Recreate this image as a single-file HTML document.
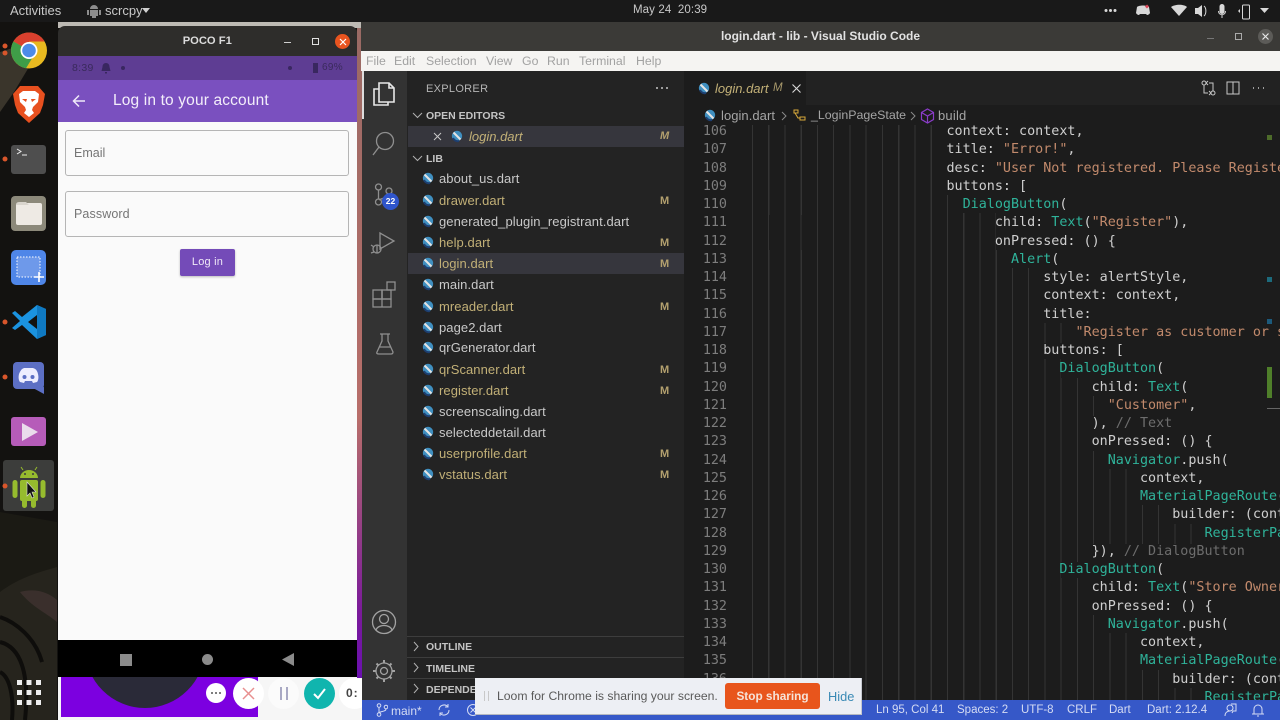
<!DOCTYPE html>
<html><head><meta charset="utf-8"><style>
*{box-sizing:border-box}
html,body{margin:0;padding:0;width:1280px;height:720px;overflow:hidden;background:#141311;font-family:"Liberation Sans",sans-serif}
.a{position:absolute;white-space:nowrap}
.f{position:absolute;left:439px;font-size:13px;letter-spacing:.07px;color:#c9c9c9;line-height:18px;white-space:nowrap}
.y{color:#c2b077}
.m{position:absolute;left:660px;font-size:11px;font-weight:bold;color:#b3a06e;line-height:14px}
.h{position:absolute;font-size:10.500px;font-weight:bold;color:#c4c4c4;white-space:nowrap}
.mn{position:absolute;top:54px;font-size:12.300px;color:#a2a2a2;white-space:nowrap}
#code{position:absolute;left:684px;top:125px;width:596px;height:575px;overflow:hidden;background:#1c1c1c}
#wrap{position:absolute;left:0;top:2px;width:596px;height:580px}
.l{position:absolute;left:0;height:18.250px;width:596px;font:13.400px/18.250px "DejaVu Sans Mono",monospace;color:#cfcfcf;white-space:pre}
.l b{font-weight:normal;position:absolute;left:0;width:43px;text-align:right;color:#7d7d7d}
.l i{font-style:normal;position:absolute;left:67.500px;top:-1px;height:20px;background:repeating-linear-gradient(to right,#343434 0,#343434 1px,transparent 1px,transparent 16.250px)}
.l span{position:absolute;left:69px}
.l u{text-decoration:none}
.t{color:#2fb39a}.s{color:#c28a6c}.c{color:#6d6d6d}
.st{position:absolute;top:704px;font-size:11.500px;color:#d5dcf3;white-space:nowrap}
</style></head><body>

<!-- wallpaper / dock -->
<svg class="a" style="left:0;top:22px" width="60" height="698">
<rect width="60" height="698" fill="#131210"/>
<path d="M0 30 L25 22 L32 40 L14 70 L0 90Z" fill="#3a352b"/>
<path d="M0 490 L57 500 L57 640 L0 640Z" fill="#1b1a14"/>
<path d="M0 570 C20 555 40 550 57 545 L57 698 L0 698Z" fill="#26241d"/>
<path d="M0 595 C15 600 35 615 42 640 M0 620 C20 625 30 650 25 698 M0 650 C10 655 14 675 12 698" stroke="#0e0d0b" stroke-width="4" fill="none"/>
<path d="M20 570 C35 566 48 570 57 578 L57 600 C45 590 32 585 20 570Z" fill="#3a2f2c"/>
</svg>

<!-- top bar -->
<div class="a" style="left:0;top:0;width:1280px;height:22px;background:#191919"></div>
<div class="a" style="left:10px;top:3px;font-size:13px;color:#c8c8c8">Activities</div>
<svg class="a" style="left:87px;top:4px" width="14" height="15"><path d="M3 5a4 4 0 0 1 8 0zM3 6h8v6H9v2H5v-2H3zM0 6h2v5H0zM12 6h2v5h-2z" fill="#8d8d8d"/></svg>
<div class="a" style="left:105px;top:3px;font-size:13px;color:#c8c8c8">scrcpy</div>
<svg class="a" style="left:142px;top:8px" width="9" height="6"><path d="M0 0h8L4 5z" fill="#d0d0d0"/></svg>
<div class="a" style="left:633px;top:4px;font-size:11.500px;letter-spacing:.1px;color:#c8c8c8">May 24&nbsp; 20:39</div>
<svg class="a" style="left:1100px;top:0" width="180" height="22">
<g fill="#d8d8d8"><circle cx="6" cy="10.500" r="1.500"/><circle cx="10.500" cy="10.500" r="1.500"/><circle cx="15" cy="10.500" r="1.500"/>
<path d="M37 7c2-2 10-2 12 0l1 6c-1 2-3 2-3 2l-1-1h-6l-1 1s-2 0-3-2z"/>
<path d="M71 7c4-3 13-3 16 0l-8 9z"/>
<path d="M95 8h3l4-3v12l-4-3h-3z"/><path d="M104 6c2.500 2 2.500 8 0 10" stroke="#d8d8d8" fill="none"/>
<rect x="119.500" y="4" width="5" height="10" rx="2.500"/><path d="M118.500 11c0 5 7 5 7 0M122 15v3" stroke="#d8d8d8" fill="none"/>
<path d="M140 9l-2 2 2 2z"/></g>
<rect x="142.500" y="5" width="7" height="14" rx="1" stroke="#d8d8d8" fill="none"/>
<path d="M46 5.500l2 2" stroke="#d9485a" stroke-width="3"/>
</svg>
<svg class="a" style="left:1260px;top:8px" width="10" height="6"><path d="M0 0h9L4.500 5z" fill="#d8d8d8"/></svg>

<!-- dock icons -->
<svg class="a" style="left:0;top:22px" width="58" height="698">
<circle cx="5" cy="24" r="2.500" fill="#d9562b"/><circle cx="5" cy="31" r="2.500" fill="#d9562b"/>
<g transform="translate(29,28.500)">
<circle r="18" fill="#e8b920"/>
<path d="M0 0 L-15.600 -9 A18 18 0 0 1 15.600 -9 L0 -9Z" fill="#d8402e"/><path d="M-15.600 -9 A18 18 0 0 0 -3 17.700 L6 3Z" fill="#3f9d48"/>
<circle r="8.500" fill="#fff"/><circle r="6.800" fill="#4c8be8"/></g>
<path d="M20 64h18l7 8-2 11-3 8-11 10-11-10-3-8-2-11z" fill="#e8501f"/>
<path d="M19 72l4-3h12l4 3-1 8-5 5-1 3 2 3-5 4-5-4 2-3-1-3-5-5z" fill="#fff"/><path d="M22 77h5l-1 3zM36 77h-5l1 3z" fill="#e8501f"/>
<rect x="11" y="123" width="35" height="29" rx="3" fill="#4e4e4e"/><circle cx="5" cy="137" r="2.500" fill="#d9562b"/>
<path d="M17 127l4 2.500-4 2.500" stroke="#eee" fill="none"/><path d="M22 133h5" stroke="#eee"/>
<rect x="11" y="174" width="35" height="35" rx="4" fill="#8c897a"/><rect x="16" y="181" width="26" height="22" rx="2" fill="#eeeae4"/><path d="M16 183q0-3 3-3h7l3 3z" fill="#d9d5cd"/>
<rect x="11" y="228" width="35" height="35" rx="5" fill="#4f86e8"/><rect x="17" y="235" width="23" height="20" fill="#6e99ea" stroke="#fff" stroke-dasharray="1.500 1.500"/><path d="M39 250v10M34 255h10" stroke="#fff" stroke-width="1.600"/>
<circle cx="5" cy="300" r="2.500" fill="#d9562b"/>
<g transform="translate(0,-11)"><path d="M37 294l9 4v26l-9 4-15-14-7 5-3-2 8-7-8-8 3-2 7 6z" fill="#1b93e0"/><path d="M37 304l-9 7 9 7z" fill="#131210"/><path d="M37 294l9 4v26l-9 4z" fill="#0f79c2"/></g>
<rect x="13" y="340" width="31" height="27" rx="4" fill="#5c6fc4"/><path d="M33 366l11 6v-7z" fill="#5c6fc4"/>
<path d="M19 352c2-5 4-6 6-6h7c2 0 5 1 6 6 1 4 0 7-1 8l-4 1-1-2h-7l-1 2-4-1c-1-1-2-4-1-8z" fill="#eef"/><circle cx="24.500" cy="355" r="2" fill="#5c6fc4"/><circle cx="32.500" cy="355" r="2" fill="#5c6fc4"/>
<circle cx="5" cy="355" r="2.500" fill="#d9562b"/>
<rect x="11" y="395" width="35" height="29" rx="3" fill="#b65cb9"/><path d="M22 401l16 9-16 9z" fill="#eadcec"/>
<rect x="3" y="438" width="51" height="51" rx="3" fill="#3c3d3b"/>
<circle cx="5" cy="464" r="2.500" fill="#d9562b"/>
<g fill="#96bb2e"><path d="M20 456a9 8 0 0 1 18 0z"/><rect x="20" y="458" width="18" height="21" rx="2"/><rect x="12.500" y="458" width="5" height="18" rx="2.500"/><rect x="40.500" y="458" width="5" height="18" rx="2.500"/><rect x="22" y="474" width="5" height="12" rx="2.500"/><rect x="31" y="474" width="5" height="12" rx="2.500"/></g>
<path d="M21 445l2 3M37 445l-2 3" stroke="#96bb2e"/><circle cx="25" cy="452" r="1" fill="#3c3d3b"/><circle cx="33" cy="452" r="1" fill="#3c3d3b"/>
<path d="M27 460v14l3-3 2 5 2-1-2-5h4z" fill="#111" stroke="#ddd" stroke-width=".6"/>
<g fill="#eee"><rect x="17" y="658" width="5" height="5"/><rect x="26.500" y="658" width="5" height="5"/><rect x="36" y="658" width="5" height="5"/><rect x="17" y="668" width="5" height="5"/><rect x="26.500" y="668" width="5" height="5"/><rect x="36" y="668" width="5" height="5"/><rect x="17" y="678" width="5" height="5"/><rect x="26.500" y="678" width="5" height="5"/><rect x="36" y="678" width="5" height="5"/></g>
</svg>

<!-- behind window -->
<div class="a" style="left:58px;top:22px;width:304px;height:6px;background:#bdbab4"></div>
<div class="a" style="left:58px;top:677px;width:304px;height:43px;background:#f6f6f6"></div>
<div class="a" style="left:61px;top:677px;width:197px;height:40px;background:#7c00e0"></div>
<div class="a" style="left:85px;top:648px;width:120px;height:60px;border-radius:0 0 60px 60px;background:#2a2a38"></div>
<div class="a" style="left:357px;top:28px;width:5px;height:650px;background:linear-gradient(#9a6a64 0,#b86e6a 60%,#7a1a9a 90%,#6a10b0 100%)"></div>
<div class="a" style="left:206px;top:683px;width:20px;height:20px;border-radius:50%;background:#fff"></div>
<svg class="a" style="left:210px;top:691px" width="12" height="4" fill="#555"><circle cx="2" cy="2" r="1"/><circle cx="6" cy="2" r="1"/><circle cx="10" cy="2" r="1"/></svg>
<div class="a" style="left:233px;top:678px;width:31px;height:31px;border-radius:50%;background:#fff"></div>
<svg class="a" style="left:241px;top:686px" width="15" height="15"><path d="M2 2l11 11M13 2L2 13" stroke="#e88f8f" stroke-width="1.500"/></svg>
<div class="a" style="left:268px;top:678px;width:31px;height:31px;border-radius:50%;background:#fbfbfb"></div>
<div class="a" style="left:280px;top:687px;width:8px;height:13px;border-left:2.500px solid #a9a9c4;border-right:2.500px solid #a9a9c4"></div>
<div class="a" style="left:304px;top:678px;width:31px;height:31px;border-radius:50%;background:#10b5ae"></div>
<svg class="a" style="left:312px;top:687px" width="15" height="13"><path d="M2 7l4 4 7-9" stroke="#fff" stroke-width="2" fill="none"/></svg>
<div class="a" style="left:339px;top:678px;width:31px;height:31px;border-radius:50%;background:#fff"></div>
<div class="a" style="left:346px;top:686px;font-size:12px;font-weight:bold;letter-spacing:1px;color:#444">0:</div>

<!-- phone window -->
<div class="a" style="left:57.500px;top:26px;width:299.500px;height:30px;background:#2e2d2b;border-radius:7px 7px 0 0"></div>
<div class="a" style="left:57.500px;top:35px;width:299.500px;text-align:center;font-size:11.200px;font-weight:bold;color:#dcdcdc">POCO F1</div>
<div class="a" style="left:284px;top:42px;width:7px;height:1px;background:#cfcfcf"></div>
<div class="a" style="left:312px;top:38px;width:6.500px;height:6.500px;border:1px solid #e0e0e0"></div>
<div class="a" style="left:335px;top:34px;width:15px;height:15px;border-radius:50%;background:#e9541f"></div>
<svg class="a" style="left:338.500px;top:37.500px" width="8" height="8"><path d="M1 1l6 6M7 1L1 7" stroke="#fff" stroke-width="1.200"/></svg>
<div class="a" style="left:57.500px;top:56px;width:299.500px;height:24px;background:#5e3d93"></div>
<div class="a" style="left:72px;top:62px;font-size:10.500px;letter-spacing:.3px;color:#3a2a5c">8:39</div>
<svg class="a" style="left:100px;top:62px" width="12" height="12"><path d="M6 1c2.500 0 3.500 2 3.500 4l1 4H1.500l1-4C2.500 3 3.500 1 6 1zM5 10h2v1.500H5z" fill="#392760"/></svg>
<div class="a" style="left:121px;top:66px;width:4px;height:4px;border-radius:50%;background:#392760"></div>
<div class="a" style="left:288px;top:66px;width:4px;height:4px;border-radius:50%;background:#392760"></div>
<div class="a" style="left:313px;top:63px;width:5px;height:10px;background:#392760"></div>
<div class="a" style="left:322px;top:62px;font-size:10px;letter-spacing:.3px;color:#3a2a5c">69%</div>
<div class="a" style="left:57.500px;top:80px;width:299.500px;height:42px;background:#7a50bf"></div>
<svg class="a" style="left:72px;top:94px" width="14" height="14"><path d="M13 7H2M7 1.500L1.500 7 7 12.500" stroke="#f0eaf8" stroke-width="1.500" fill="none"/></svg>
<div class="a" style="left:113px;top:92px;font-size:15.500px;letter-spacing:.15px;color:#f3eefa">Log in to your account</div>
<div class="a" style="left:57.500px;top:122px;width:299.500px;height:518px;background:#fafafa"></div>
<div class="a" style="left:65px;top:130px;width:284px;height:46px;border:1px solid #b5b5b5;border-radius:3px"></div>
<div class="a" style="left:74px;top:146px;font-size:12.500px;color:#757575">Email</div>
<div class="a" style="left:65px;top:191px;width:284px;height:46px;border:1px solid #b5b5b5;border-radius:3px"></div>
<div class="a" style="left:74px;top:207px;font-size:12.500px;letter-spacing:.1px;color:#757575">Password</div>
<div class="a" style="left:180px;top:249px;width:55px;height:27px;background:#744bb8;border-radius:2px;text-align:center;font-size:11px;line-height:27px;letter-spacing:.2px;color:#efe9f7;box-shadow:0 1px 2px rgba(0,0,0,.25)">Log in</div>
<div class="a" style="left:57.500px;top:640px;width:299.500px;height:37px;background:#000"></div>
<div class="a" style="left:120px;top:654px;width:12px;height:12px;background:#8b8b8b"></div>
<div class="a" style="left:202px;top:654px;width:11px;height:11px;border-radius:50%;background:#8b8b8b"></div>
<svg class="a" style="left:282px;top:653px" width="12" height="13"><path d="M12 0v13L0 6.500z" fill="#8b8b8b"/></svg>

<!-- vscode window -->
<div class="a" style="left:361px;top:22px;width:919px;height:29px;background:#3b3a37"></div>
<div class="a" style="left:361px;top:29px;width:919px;text-align:center;font-size:12px;font-weight:bold;color:#e2e2e2">login.dart - lib - Visual Studio Code</div>
<div class="a" style="left:1207px;top:38px;width:7px;height:1px;background:#777"></div>
<div class="a" style="left:1235px;top:33px;width:7px;height:7px;border:1px solid #aaa"></div>
<div class="a" style="left:1258px;top:29px;width:15px;height:15px;border-radius:50%;background:#5c5b58"></div>
<svg class="a" style="left:1262px;top:33px" width="7" height="7"><path d="M.5.5l6 6M6.500.5l-6 6" stroke="#e8e8e8" stroke-width="1.200"/></svg>
<div class="a" style="left:361px;top:51px;width:919px;height:20px;background:#f5f4f2"></div>
<div class="mn" style="left:366px">File</div>
<div class="mn" style="left:394px">Edit</div>
<div class="mn" style="left:426px">Selection</div>
<div class="mn" style="left:486px">View</div>
<div class="mn" style="left:522px">Go</div>
<div class="mn" style="left:547px">Run</div>
<div class="mn" style="left:579px">Terminal</div>
<div class="mn" style="left:636px">Help</div>

<!-- activity bar -->
<div class="a" style="left:362px;top:71px;width:45px;height:629px;background:#333"></div>
<div class="a" style="left:362px;top:71px;width:2px;height:48px;background:#ddd"></div>
<svg class="a" style="left:362px;top:71px" width="45" height="629" fill="none" stroke="#8f8f8f" stroke-width="1.300">
<g stroke="#e8e8e8" stroke-width="1.600"><path d="M17 12h10l5 5v14H17z" fill="#333"/><path d="M27 12v5h5"/><path d="M17 18h-5v16h14v-3"/></g>
<circle cx="23" cy="70" r="8.500"/><path d="M17 76l-6 8"/>
<circle cx="16.500" cy="116" r="3"/><circle cx="27" cy="120" r="3"/><circle cx="16.500" cy="131" r="3"/><path d="M16.500 119v9M27 123c0 4-7 4-10 6"/>
<g transform="translate(-2,-3)"><path d="M20 165v16l14-8z"/><circle cx="17" cy="181" r="4"/><path d="M11 177l3 2M11 185l3-1M17 177v8"/></g>
<g transform="translate(0,3)"><rect x="11" y="216" width="9" height="9"/><rect x="20" y="216" width="9" height="9"/><rect x="11" y="225" width="18" height="8"/><path d="M20 216v17"/><rect x="25" y="208" width="8" height="8"/></g>
<g transform="translate(0,2)"><path d="M20 261v7l-5 11q-1 2 2 2h12q2 0 2-2l-5-11v-7M18 261h10M17 274h12"/></g>
<g stroke="#a2a2a2"><circle cx="22" cy="551" r="11.500"/><circle cx="22" cy="548" r="4.500"/><path d="M14 559c2-6 14-6 16 0"/></g>
<g stroke="#a2a2a2"><circle cx="22" cy="600" r="3.500"/><circle cx="22" cy="600" r="8"/><path d="M22 589v3M22 608v3M11 600h3M30 600h3M14.500 592.500l2 2M27.500 605.500l2 2M14.500 607.500l2-2M27.500 594.500l2-2" stroke-width="2"/></g>
</svg>
<div class="a" style="left:382px;top:193px;width:17px;height:17px;border-radius:50%;background:#2f55cc;color:#fff;font-size:8.500px;font-weight:bold;text-align:center;line-height:17px">22</div>

<!-- sidebar -->
<div class="a" style="left:407px;top:71px;width:277px;height:629px;background:#232323"></div>
<div class="a" style="left:426px;top:83px;font-size:11px;letter-spacing:.3px;color:#b5b5b5">EXPLORER</div>
<svg class="a" style="left:654px;top:84px" width="16" height="8" fill="#c4c4c4"><circle cx="3" cy="4" r="1"/><circle cx="8" cy="4" r="1"/><circle cx="13" cy="4" r="1"/></svg>
<svg class="a" style="left:411px;top:105px" width="14" height="62" fill="none" stroke="#b0b0b0"><path d="M2 8l4.500 4.500L11 8M2 51l4.500 4.500L11 51"/></svg>
<div class="h" style="left:426px;top:110px">OPEN EDITORS</div>
<div class="a" style="left:408px;top:126px;width:276px;height:21px;background:#36363d"></div>
<svg class="a" style="left:433px;top:132px" width="9" height="9"><path d="M1 1l7 7M8 1L1 8" stroke="#c8c8c8" stroke-width="1"/></svg>
<div class="a" style="left:469px;top:129px;font-size:13px;font-style:italic;color:#c2b077">login.dart</div>
<div class="a" style="left:660px;top:130px;font-size:11px;font-weight:bold;font-style:italic;color:#b3a06e">M</div>
<div class="h" style="left:426px;top:153px">LIB</div>
<div class="a" style="left:408px;top:253px;width:276px;height:21px;background:#36363d"></div>

<div class="f" style="top:170px">about_us.dart</div>
<div class="f y" style="top:192px">drawer.dart</div>
<div class="f" style="top:213px">generated_plugin_registrant.dart</div>
<div class="f y" style="top:234px">help.dart</div>
<div class="f y" style="top:255px">login.dart</div>
<div class="f" style="top:276px">main.dart</div>
<div class="f y" style="top:298px">mreader.dart</div>
<div class="f" style="top:319px">page2.dart</div>
<div class="f" style="top:339px">qrGenerator.dart</div>
<div class="f y" style="top:361px">qrScanner.dart</div>
<div class="f y" style="top:382px">register.dart</div>
<div class="f" style="top:403px">screenscaling.dart</div>
<div class="f" style="top:424px">selecteddetail.dart</div>
<div class="f y" style="top:445px">userprofile.dart</div>
<div class="f y" style="top:466px">vstatus.dart</div>
<div class="m" style="top:194px">M</div><div class="m" style="top:236px">M</div><div class="m" style="top:257px">M</div><div class="m" style="top:300px">M</div><div class="m" style="top:363px">M</div><div class="m" style="top:384px">M</div><div class="m" style="top:447px">M</div><div class="m" style="top:468px">M</div>

<svg class="a" style="left:0;top:0" width="720" height="500">
<defs><g id="dart"><circle cx="6" cy="6" r="5.200" fill="#3f8fc0"/><path d="M2.500 2.500l7 7" stroke="#e4e4e4" stroke-width="2"/><path d="M2 8a5 5 0 0 0 6 3" stroke="#1d3e70" stroke-width="2" fill="none"/></g></defs>
<use href="#dart" x="451" y="130"/><use href="#dart" x="422" y="172"/><use href="#dart" x="422" y="194"/><use href="#dart" x="422" y="215"/><use href="#dart" x="422" y="236"/><use href="#dart" x="422" y="257"/><use href="#dart" x="422" y="278"/><use href="#dart" x="422" y="300"/><use href="#dart" x="422" y="321"/><use href="#dart" x="422" y="341"/><use href="#dart" x="422" y="363"/><use href="#dart" x="422" y="384"/><use href="#dart" x="422" y="405"/><use href="#dart" x="422" y="426"/><use href="#dart" x="422" y="447"/><use href="#dart" x="422" y="468"/>
</svg>

<div class="a" style="left:407px;top:636px;width:277px;height:1px;background:#3d3d3d"></div>
<div class="a" style="left:407px;top:657px;width:277px;height:1px;background:#3d3d3d"></div>
<div class="a" style="left:407px;top:678px;width:277px;height:1px;background:#3d3d3d"></div>
<svg class="a" style="left:411px;top:640px" width="12" height="56" fill="none" stroke="#b0b0b0"><path d="M3 2l4 4.500L3 11M3 23l4 4.500L3 32M3 44l4 4.500L3 53"/></svg>
<div class="h" style="left:426px;top:641px">OUTLINE</div>
<div class="h" style="left:426px;top:663px">TIMELINE</div>
<div class="h" style="left:426px;top:684px">DEPENDE</div>

<!-- tabs & breadcrumbs -->
<div class="a" style="left:684px;top:71px;width:596px;height:34px;background:#222"></div>
<div class="a" style="left:684px;top:71px;width:122px;height:34px;background:#1c1c1c"></div>
<div class="a" style="left:684px;top:105px;width:596px;height:20px;background:#1c1c1c"></div>
<div class="a" style="left:715px;top:81px;font-size:13px;font-style:italic;color:#c2b077">login.dart</div>
<div class="a" style="left:773px;top:82px;font-size:11.500px;font-style:italic;color:#a99a6c">M</div>
<svg class="a" style="left:792px;top:84px" width="9" height="9"><path d="M.5.5l8 8M8.500.5l-8 8" stroke="#d8d8d8" stroke-width="1.100"/></svg>
<svg class="a" style="left:680px;top:75px" width="50" height="50"><use href="#dart" x="18" y="7"/><use href="#dart" x="24" y="34"/></svg>
<div class="a" style="left:721px;top:108px;font-size:13px;letter-spacing:.05px;color:#a5a5a5">login.dart</div>
<svg class="a" style="left:780px;top:108px" width="240" height="16" fill="none">
<path d="M2 4l4 4-4 4" stroke="#8a8a8a"/>
<path d="M14 2h4v3h-4zM20 9h5v3h-5zM15 5l3 5h2" stroke="#d8a93a"/>
<path d="M131 4l4 4-4 4" stroke="#8a8a8a"/>
<path d="M147.500 1l6 3.500v7l-6 3.500-6-3.500v-7zM141.500 4.500l6 3.500 6-3.500M147.500 8v7" stroke="#8a3cc8" stroke-width="1.200"/>
</svg>
<div class="a" style="left:811px;top:108px;font-size:12.400px;color:#a5a5a5">_LoginPageState</div>
<div class="a" style="left:938px;top:108px;font-size:13px;letter-spacing:.2px;color:#a5a5a5">build</div>
<svg class="a" style="left:1201px;top:80px" width="70" height="16" fill="none" stroke="#c8c8c8">
<circle cx="3" cy="3" r="2"/><circle cx="12" cy="13" r="2"/><path d="M3 5v8h4M12 11V3H8M7 1L5 3l2 2M8 15l2-2-2-2" stroke-width="1"/>
<rect x="26" y="2" width="12" height="12"/><path d="M32 2v12"/>
<path d="M52 8h1M57 8h1M62 8h1" stroke-width="1.500"/>
</svg>

<!-- code -->
<div id="code"><div id="wrap">
<div class="l" style="top:-4px"><b>106</b><i style="width:195px"></i><span>                        context: context,</span></div>
<div class="l" style="top:14px"><b>107</b><i style="width:195px"></i><span>                        title: <u class="s">"Error!"</u>,</span></div>
<div class="l" style="top:32.500px"><b>108</b><i style="width:195px"></i><span>                        desc: <u class="s">"User Not registered. Please Register"</u></span></div>
<div class="l" style="top:50.700px"><b>109</b><i style="width:195px"></i><span>                        buttons: [</span></div>
<div class="l" style="top:69px"><b>110</b><i style="width:211px"></i><span>                          <u class="t">DialogButton</u>(</span></div>
<div class="l" style="top:87.200px"><b>111</b><i style="width:244px"></i><span>                              child: <u class="t">Text</u>(<u class="s">"Register"</u>),</span></div>
<div class="l" style="top:105.500px"><b>112</b><i style="width:244px"></i><span>                              onPressed: () {</span></div>
<div class="l" style="top:123.700px"><b>113</b><i style="width:260px"></i><span>                                <u class="t">Alert</u>(</span></div>
<div class="l" style="top:142px"><b>114</b><i style="width:292px"></i><span>                                    style: alertStyle,</span></div>
<div class="l" style="top:160.200px"><b>115</b><i style="width:292px"></i><span>                                    context: context,</span></div>
<div class="l" style="top:178.500px"><b>116</b><i style="width:292px"></i><span>                                    title:</span></div>
<div class="l" style="top:196.700px"><b>117</b><i style="width:325px"></i><span>                                        <u class="s">"Register as customer or store"</u></span></div>
<div class="l" style="top:215px"><b>118</b><i style="width:292px"></i><span>                                    buttons: [</span></div>
<div class="l" style="top:233.200px"><b>119</b><i style="width:309px"></i><span>                                      <u class="t">DialogButton</u>(</span></div>
<div class="l" style="top:251.500px"><b>120</b><i style="width:341px"></i><span>                                          child: <u class="t">Text</u>(</span></div>
<div class="l" style="top:269.700px"><b>121</b><i style="width:357px"></i><span>                                            <u class="s">"Customer"</u>,</span></div>
<div class="l" style="top:288px"><b>122</b><i style="width:341px"></i><span>                                          ), <u class="c">// Text</u></span></div>
<div class="l" style="top:306.200px"><b>123</b><i style="width:341px"></i><span>                                          onPressed: () {</span></div>
<div class="l" style="top:324.500px"><b>124</b><i style="width:357px"></i><span>                                            <u class="t">Navigator</u>.push(</span></div>
<div class="l" style="top:342.700px"><b>125</b><i style="width:390px"></i><span>                                                context,</span></div>
<div class="l" style="top:361px"><b>126</b><i style="width:390px"></i><span>                                                <u class="t">MaterialPageRoute</u>(</span></div>
<div class="l" style="top:379.200px"><b>127</b><i style="width:422px"></i><span>                                                    builder: (context) =&gt;</span></div>
<div class="l" style="top:397.500px"><b>128</b><i style="width:455px"></i><span>                                                        <u class="t">RegisterPage</u>()));</span></div>
<div class="l" style="top:415.700px"><b>129</b><i style="width:341px"></i><span>                                          }), <u class="c">// DialogButton</u></span></div>
<div class="l" style="top:434px"><b>130</b><i style="width:309px"></i><span>                                      <u class="t">DialogButton</u>(</span></div>
<div class="l" style="top:452.200px"><b>131</b><i style="width:341px"></i><span>                                          child: <u class="t">Text</u>(<u class="s">"Store Owner"</u>),</span></div>
<div class="l" style="top:470.500px"><b>132</b><i style="width:341px"></i><span>                                          onPressed: () {</span></div>
<div class="l" style="top:488.700px"><b>133</b><i style="width:357px"></i><span>                                            <u class="t">Navigator</u>.push(</span></div>
<div class="l" style="top:507px"><b>134</b><i style="width:390px"></i><span>                                                context,</span></div>
<div class="l" style="top:525.200px"><b>135</b><i style="width:390px"></i><span>                                                <u class="t">MaterialPageRoute</u>(</span></div>
<div class="l" style="top:543.500px"><b>136</b><i style="width:422px"></i><span>                                                    builder: (context) =&gt;</span></div>
<div class="l" style="top:561.700px"><b>137</b><i style="width:455px"></i><span>                                                        <u class="t">RegisterPage</u>()));</span></div>
</div></div>
<div class="a" style="left:1267px;top:135px;width:5px;height:5px;background:#4d6b2a"></div>
<div class="a" style="left:1267px;top:277px;width:5px;height:5px;background:#1c6a7c"></div>
<div class="a" style="left:1267px;top:319px;width:5px;height:5px;background:#1c5a7c"></div>
<div class="a" style="left:1267px;top:367px;width:5px;height:31px;background:#4f7f2a"></div>
<div class="a" style="left:1267px;top:408px;width:13px;height:1px;background:#666"></div>

<!-- status bar -->
<div class="a" style="left:362px;top:700px;width:918px;height:20px;background:#3658c8"></div>
<svg class="a" style="left:376px;top:703px" width="12" height="14" fill="none" stroke="#d5dcf3"><circle cx="3" cy="2.500" r="1.800"/><circle cx="3" cy="11.500" r="1.800"/><circle cx="10" cy="4" r="1.800"/><path d="M3 4.500v5M10 6c0 3-6 2-7 4"/></svg>
<div class="st" style="left:391px;font-size:12px">main*</div>
<svg class="a" style="left:437px;top:703px" width="14" height="14" fill="none" stroke="#d5dcf3"><path d="M2 7a5 5 0 0 1 9-3M12 7a5 5 0 0 1-9 3M11 1v3H8M3 13v-3h3"/></svg>
<svg class="a" style="left:466px;top:703px" width="14" height="14" fill="none" stroke="#d5dcf3"><circle cx="7" cy="7" r="5.500"/><path d="M4.500 4.500l5 5M9.500 4.500l-5 5"/></svg>
<div class="st" style="left:876px">Ln 95, Col 41</div>
<div class="st" style="left:957px">Spaces: 2</div>
<div class="st" style="left:1021px">UTF-8</div>
<div class="st" style="left:1067px">CRLF</div>
<div class="st" style="left:1109px">Dart</div>
<div class="st" style="left:1147px">Dart: 2.12.4</div>
<svg class="a" style="left:1223px;top:703px" width="50" height="14" fill="none" stroke="#d5dcf3"><circle cx="7" cy="5" r="3"/><path d="M2 13c0-4 3-5 5-5M8 1h5v7h-3l-1 2"/><path d="M31 11V6a4 4 0 0 1 8 0v5zM29 11h12M34 13h2"/></svg>

<!-- loom bar -->
<div class="a" style="left:475px;top:678px;width:387px;height:37px;background:#edeff4;border-bottom:1px solid #b5b8c0;border-right:1px solid #c5c8d0"></div>
<div class="a" style="left:484px;top:691px;width:5px;height:10px;border-left:1.500px solid #c8c8c8;border-right:1.500px solid #c8c8c8"></div>
<div class="a" style="left:497px;top:689px;font-size:12.200px;color:#5a5a5a">Loom for Chrome is sharing your screen.</div>
<div class="a" style="left:725px;top:683px;width:95px;height:26px;border-radius:3px;background:#e8551c;text-align:center;font-size:11.800px;font-weight:bold;line-height:26px;color:#f6e3d8">Stop sharing</div>
<div class="a" style="left:828px;top:689px;font-size:12.800px;color:#3a8ab5">Hide</div>
</body></html>
